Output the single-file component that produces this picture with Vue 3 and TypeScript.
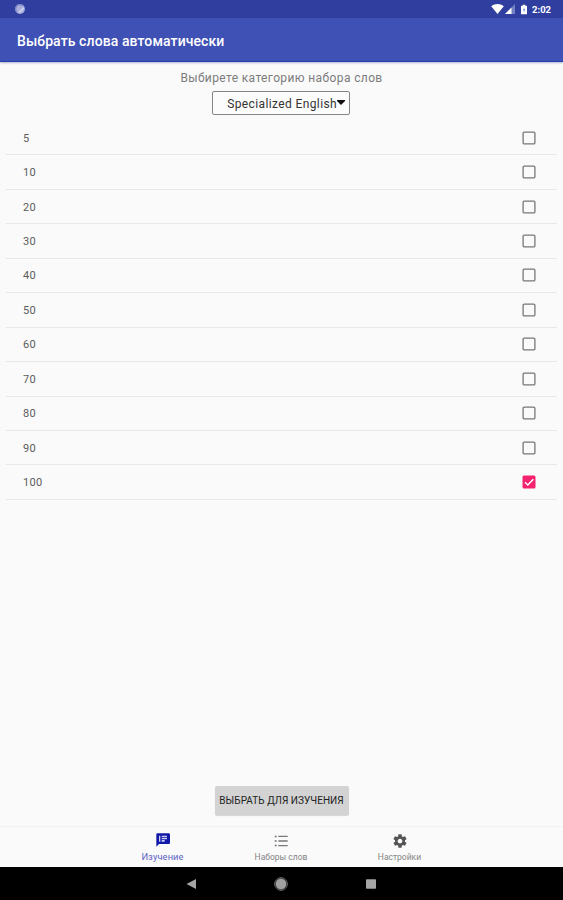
<script setup lang="ts">
import { ref } from 'vue'

const counts: number[] = [5, 10, 20, 30, 40, 50, 60, 70, 80, 90, 100]
const selected = ref<number>(100)
</script>

<template>
  <div class="screen">
    <div class="status">
      <svg class="sync" viewBox="0 0 12 12">
        <circle cx="6" cy="6" r="4.9" fill="#a9b0dc" />
        <path d="M3 8.8A4 4 0 0 1 8.4 2.7" fill="none" stroke="#7983c5" stroke-width="1.2" />
        <path d="M5 9.5L9.8 5" stroke="#d5d9f0" stroke-width="1.3" />
      </svg>
      <div class="indicators">
        <svg class="wifi" viewBox="0 0 13 10"><path d="M0.2 2.2C3.8-.6 9.2-.6 12.8 2.2L6.5 10z" fill="#fff" /></svg>
        <svg class="signal" viewBox="0 0 10 10">
          <path d="M0 10L10 0V10z" fill="#7580c4" />
          <path d="M0 10L6.5 3.5V10z" fill="#fff" />
        </svg>
        <svg class="battery" viewBox="0 0 7 11">
          <path d="M2 0h3v1.2h1.4q.6 0 .6.6v8.6q0 .6-.6.6H.6Q0 11 0 10.400V1.800q0-.6.6-.6H2z" fill="#fff" />
          <path d="M4 3L2 6.400h1.300V9L5.200 5.500H4z" fill="#8f98d0" />
        </svg>
        <span class="clock">2:02</span>
      </div>
    </div>
    <header class="appbar"><h1>Выбрать слова автоматически</h1></header>

    <main class="content">
      <p class="prompt">Выбирете категорию набора слов</p>
      <div class="spinner">
        <span>Specialized English</span>
        <svg viewBox="0 0 8 5"><path d="M0 0h8v1L4 5 0 1z" fill="#111" /></svg>
      </div>
      <ul class="list">
        <li v-for="n in counts" :key="n" @click="selected = n">
          <span class="count">{{ n }}</span>
          <svg class="box" viewBox="0 0 14 14">
            <template v-if="selected === n">
              <rect x="0.500" y="0.500" width="13" height="13" rx="1.500" fill="#f5226f" />
              <path d="M3 7.200L5.800 10 11.300 4.300" fill="none" stroke="#fff" stroke-width="1.500" />
            </template>
            <rect v-else x="1.100" y="1.100" width="11.800" height="11.800" rx="1.200" fill="none" stroke="#777" stroke-width="1.300" />
          </svg>
        </li>
      </ul>
      <button class="choose">ВЫБРАТЬ ДЛЯ ИЗУЧЕНИЯ</button>
    </main>

    <nav class="tabs">
      <div class="tab active">
        <svg viewBox="0 0 24 24">
          <path d="M20.500 2h-17C2.400 2 2 2.900 2 4v18l4-4h14.500c1.100 0 2-.9 2-2V4c0-1.100-.9-2-2-2z" fill="#1118a8" />
          <path d="M6 5.500h2v9H6zM10 5.500h8v2h-8zM10 8.800h8v2h-8zM10 12h4.500v2.500H10z" fill="#c9cdf2" />
        </svg>
        <span>Изучение</span>
      </div>
      <div class="tab">
        <svg viewBox="0 0 24 24"><path d="M2.500 4h3v2.500h-3zM2.500 10.800h3v2.500h-3zM2.500 17.500h3V20h-3zM8 4h14v2H8zM8 11h14v2H8zM8 18h14v2H8z" fill="#777" /></svg>
        <span>Наборы слов</span>
      </div>
      <div class="tab">
        <svg viewBox="0 0 24 24"><path d="M19.430 12.980c.04-.32.070-.64.070-.98s-.03-.66-.07-.98l2.110-1.650c.19-.15.24-.42.120-.64l-2-3.460c-.12-.22-.39-.3-.61-.22l-2.490 1c-.52-.4-1.080-.73-1.690-.98l-.38-2.650C14.460 2.180 14.250 2 14 2h-4c-.25 0-.46.18-.49.420l-.38 2.650c-.61.25-1.170.59-1.690.98l-2.490-1c-.23-.09-.49 0-.61.220l-2 3.460c-.13.22-.07.49.120.640l2.110 1.650c-.04.32-.07.65-.07.980s.03.66.070.980l-2.110 1.650c-.19.15-.24.42-.12.640l2 3.460c.12.22.39.3.610.220l2.490-1c.52.4 1.080.73 1.690.980l.38 2.650c.03.24.24.42.490.420h4c.25 0 .46-.18.490-.42l.38-2.650c.61-.25 1.170-.59 1.690-.98l2.490 1c.23.09.49 0 .61-.22l2-3.460c.12-.22.07-.49-.12-.64zM12 15.500c-1.930 0-3.500-1.570-3.500-3.500s1.570-3.500 3.500-3.500 3.500 1.570 3.500 3.500-1.570 3.500-3.500 3.500z" fill="#555" /></svg>
        <span>Настройки</span>
      </div>
    </nav>

    <div class="sysnav">
      <svg viewBox="0 0 14 14"><path d="M12 2v10L2.500 7z" fill="#a5a5a5" /></svg>
      <svg viewBox="0 0 14 14"><circle cx="7" cy="7" r="6.300" fill="none" stroke="#777" stroke-width="1" /><circle cx="7" cy="7" r="5.400" fill="#a0a0a0" /></svg>
      <svg viewBox="0 0 14 14"><rect x="2" y="2.300" width="10" height="9.500" rx="0.800" fill="#a5a5a5" /></svg>
    </div>
  </div>
</template>

<style>
body {
  background: #fafafa;
}
</style>

<style scoped>
.screen {
  display: flex;
  flex-direction: column;
  width: 563px;
  height: 900px;
  overflow: hidden;
  background: #fafafa;
  font-family: Roboto, sans-serif;
}
svg {
  display: block;
  flex: none;
}
.status {
  display: flex;
  justify-content: space-between;
  align-items: center;
  box-sizing: border-box;
  height: 18px;
  padding: 0 11px 0 14px;
  background: #303f9f;
}
.sync {
  width: 12px;
  height: 12px;
}
.indicators {
  display: flex;
  align-items: center;
}
.wifi {
  width: 13px;
  height: 10px;
}
.signal {
  width: 10px;
  height: 10px;
  margin-left: 1px;
}
.battery {
  width: 6px;
  height: 11px;
  margin-left: 6px;
}
.clock {
  width: 20px;
  margin-left: 5px;
  padding-top: 1px;
  font-size: 9.500px;
  font-weight: 700;
  line-height: 17px;
  white-space: nowrap;
  color: #fff;
}
.appbar {
  box-sizing: border-box;
  height: 44px;
  padding-left: 17px;
  background: #3f51b5;
  border-bottom: 1px solid #233dac;
  box-shadow: 0 1px 2px rgba(40, 50, 130, 0.35);
}
h1 {
  margin: 0;
  font-size: 14px;
  font-weight: 500;
  letter-spacing: 0.1px;
  line-height: 46px;
  color: #fff;
}
.content {
  display: flex;
  flex: 1;
  flex-direction: column;
  align-items: center;
}
.prompt {
  margin: 8px 0 5px;
  font-size: 12px;
  letter-spacing: 0.38px;
  line-height: 16px;
  color: #7c7c7c;
}
.spinner {
  display: flex;
  align-items: center;
  justify-content: flex-end;
  box-sizing: border-box;
  width: 138px;
  height: 24px;
  margin-right: 1px;
  padding: 1px 4px 0 0;
  border: 1px solid #858585;
  border-radius: 2px;
  background: #fcfcfc;
  font-size: 12px;
  letter-spacing: 0.38px;
  color: #333;
}
.spinner svg {
  width: 8px;
  height: 5px;
  margin-bottom: 2px;
}
.list {
  align-self: stretch;
  margin: 6px 6px 0;
  padding: 0;
  list-style: none;
}
li {
  display: flex;
  justify-content: space-between;
  align-items: center;
  box-sizing: border-box;
  height: 34.450px;
  padding: 0 21px 0 17px;
  border-bottom: 1px solid #e8e8e8;
}
.count {
  padding-top: 1px;
  font-size: 11px;
  letter-spacing: 0.3px;
  color: #5c5c5c;
}
.box {
  width: 14px;
  height: 14px;
}
.choose {
  width: 134px;
  height: 29px;
  margin: auto 0 11px;
  padding: 0 0 1px;
  border: 0;
  border-radius: 2px;
  background: #d3d3d3;
  box-shadow: 0 1px 1px rgba(0, 0, 0, 0.15);
  font-family: inherit;
  font-size: 10px;
  font-weight: 400;
  letter-spacing: 0.04px;
  white-space: nowrap;
  color: #222;
}
.tabs {
  display: flex;
  justify-content: center;
  box-sizing: border-box;
  height: 41px;
  padding-right: 1px;
  border-top: 1px solid #f2f2f2;
}
.tab {
  display: flex;
  flex-direction: column;
  align-items: center;
  width: 118.500px;
  padding-top: 6px;
  font-size: 8.500px;
  line-height: 12px;
  color: #858585;
}
.tab svg {
  width: 16px;
  height: 16px;
}
.tab span {
  margin-top: 2px;
}
.tab.active {
  padding-top: 5px;
  font-size: 9.300px;
  letter-spacing: 0.1px;
  color: #5a5fc4;
}
.tab.active span {
  margin-top: 3px;
}
.sysnav {
  display: flex;
  justify-content: center;
  align-items: center;
  gap: 76px;
  height: 33px;
  padding-right: 1px;
  background: #000;
}
.sysnav svg {
  width: 14px;
  height: 14px;
}
</style>
